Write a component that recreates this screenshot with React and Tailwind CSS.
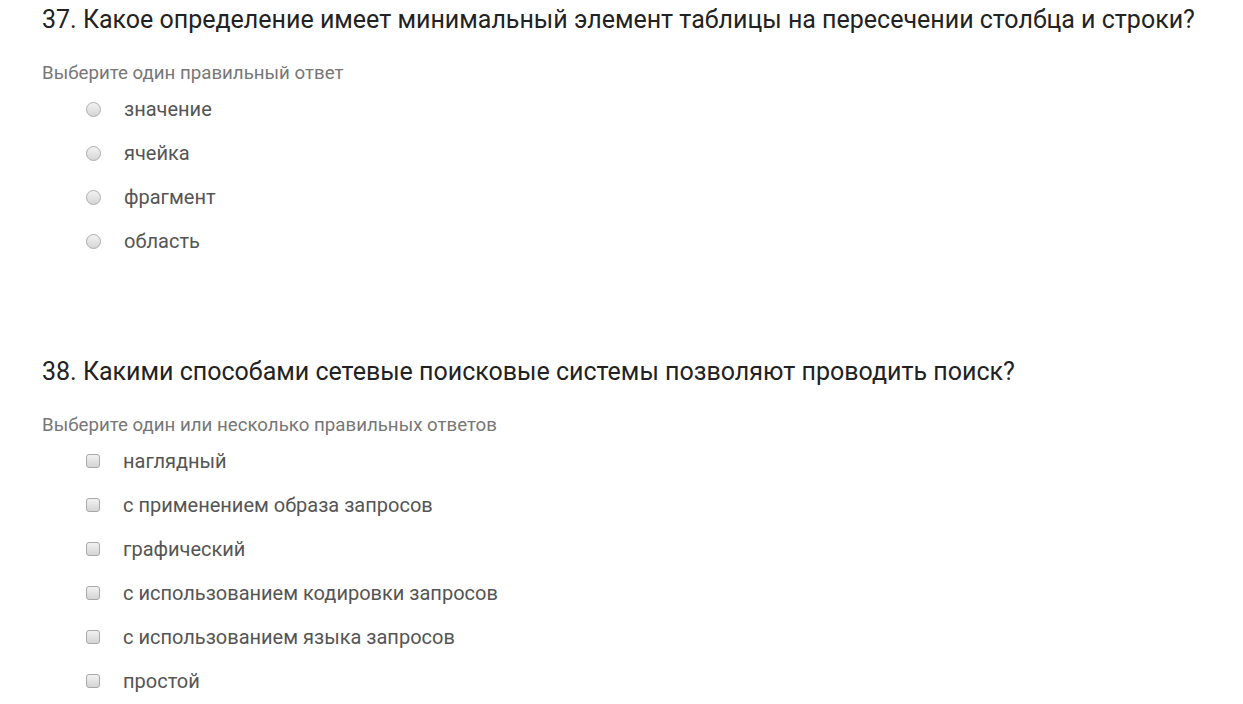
const questions = [
  {
    num: 37,
    title: 'Какое определение имеет минимальный элемент таблицы на пересечении столбца и строки?',
    hint: 'Выберите один правильный ответ',
    type: 'radio',
    options: ['значение', 'ячейка', 'фрагмент', 'область'],
  },
  {
    num: 38,
    title: 'Какими способами сетевые поисковые системы позволяют проводить поиск?',
    hint: 'Выберите один или несколько правильных ответов',
    type: 'checkbox',
    options: [
      'наглядный',
      'с применением образа запросов',
      'графический',
      'с использованием кодировки запросов',
      'с использованием языка запросов',
      'простой',
    ],
  },
]

function Marker({ type }) {
  if (type === 'radio') {
    return (
      <span className="h-[15px] w-[15px] shrink-0 rounded-full border border-[#adadad] bg-gradient-to-b from-[#f2f2f2] to-[#d6d6d6]" />
    )
  }
  return (
    <span className="h-[14px] w-[14px] shrink-0 rounded-[3px] border border-[#a8a8a8] bg-gradient-to-b from-[#f2f2f2] to-[#d4d4d4]" />
  )
}

function Question({ q }) {
  return (
    <section className="flex flex-col">
      <h2 className="text-[25px] leading-[40px] font-normal text-[#222]">
        {q.num}. {q.title}
      </h2>
      <p className="mt-[20px] text-[18.7px] leading-[26px] text-[#777]">{q.hint}</p>
      <ul className="mt-[1px] flex flex-col">
        {q.options.map((o) => (
          <li key={o} className="flex h-[44px] items-center pl-[44px]">
            <Marker type={q.type} />
            <span className="ml-[23px] text-[20px] text-[#555]">{o}</span>
          </li>
        ))}
      </ul>
    </section>
  )
}

export default function App() {
  return (
    <div className="min-h-screen bg-white font-['Roboto',sans-serif]">
      <div className="flex flex-col gap-[89px] pl-[42px]">
        {questions.map((q) => (
          <Question key={q.num} q={q} />
        ))}
      </div>
    </div>
  )
}
